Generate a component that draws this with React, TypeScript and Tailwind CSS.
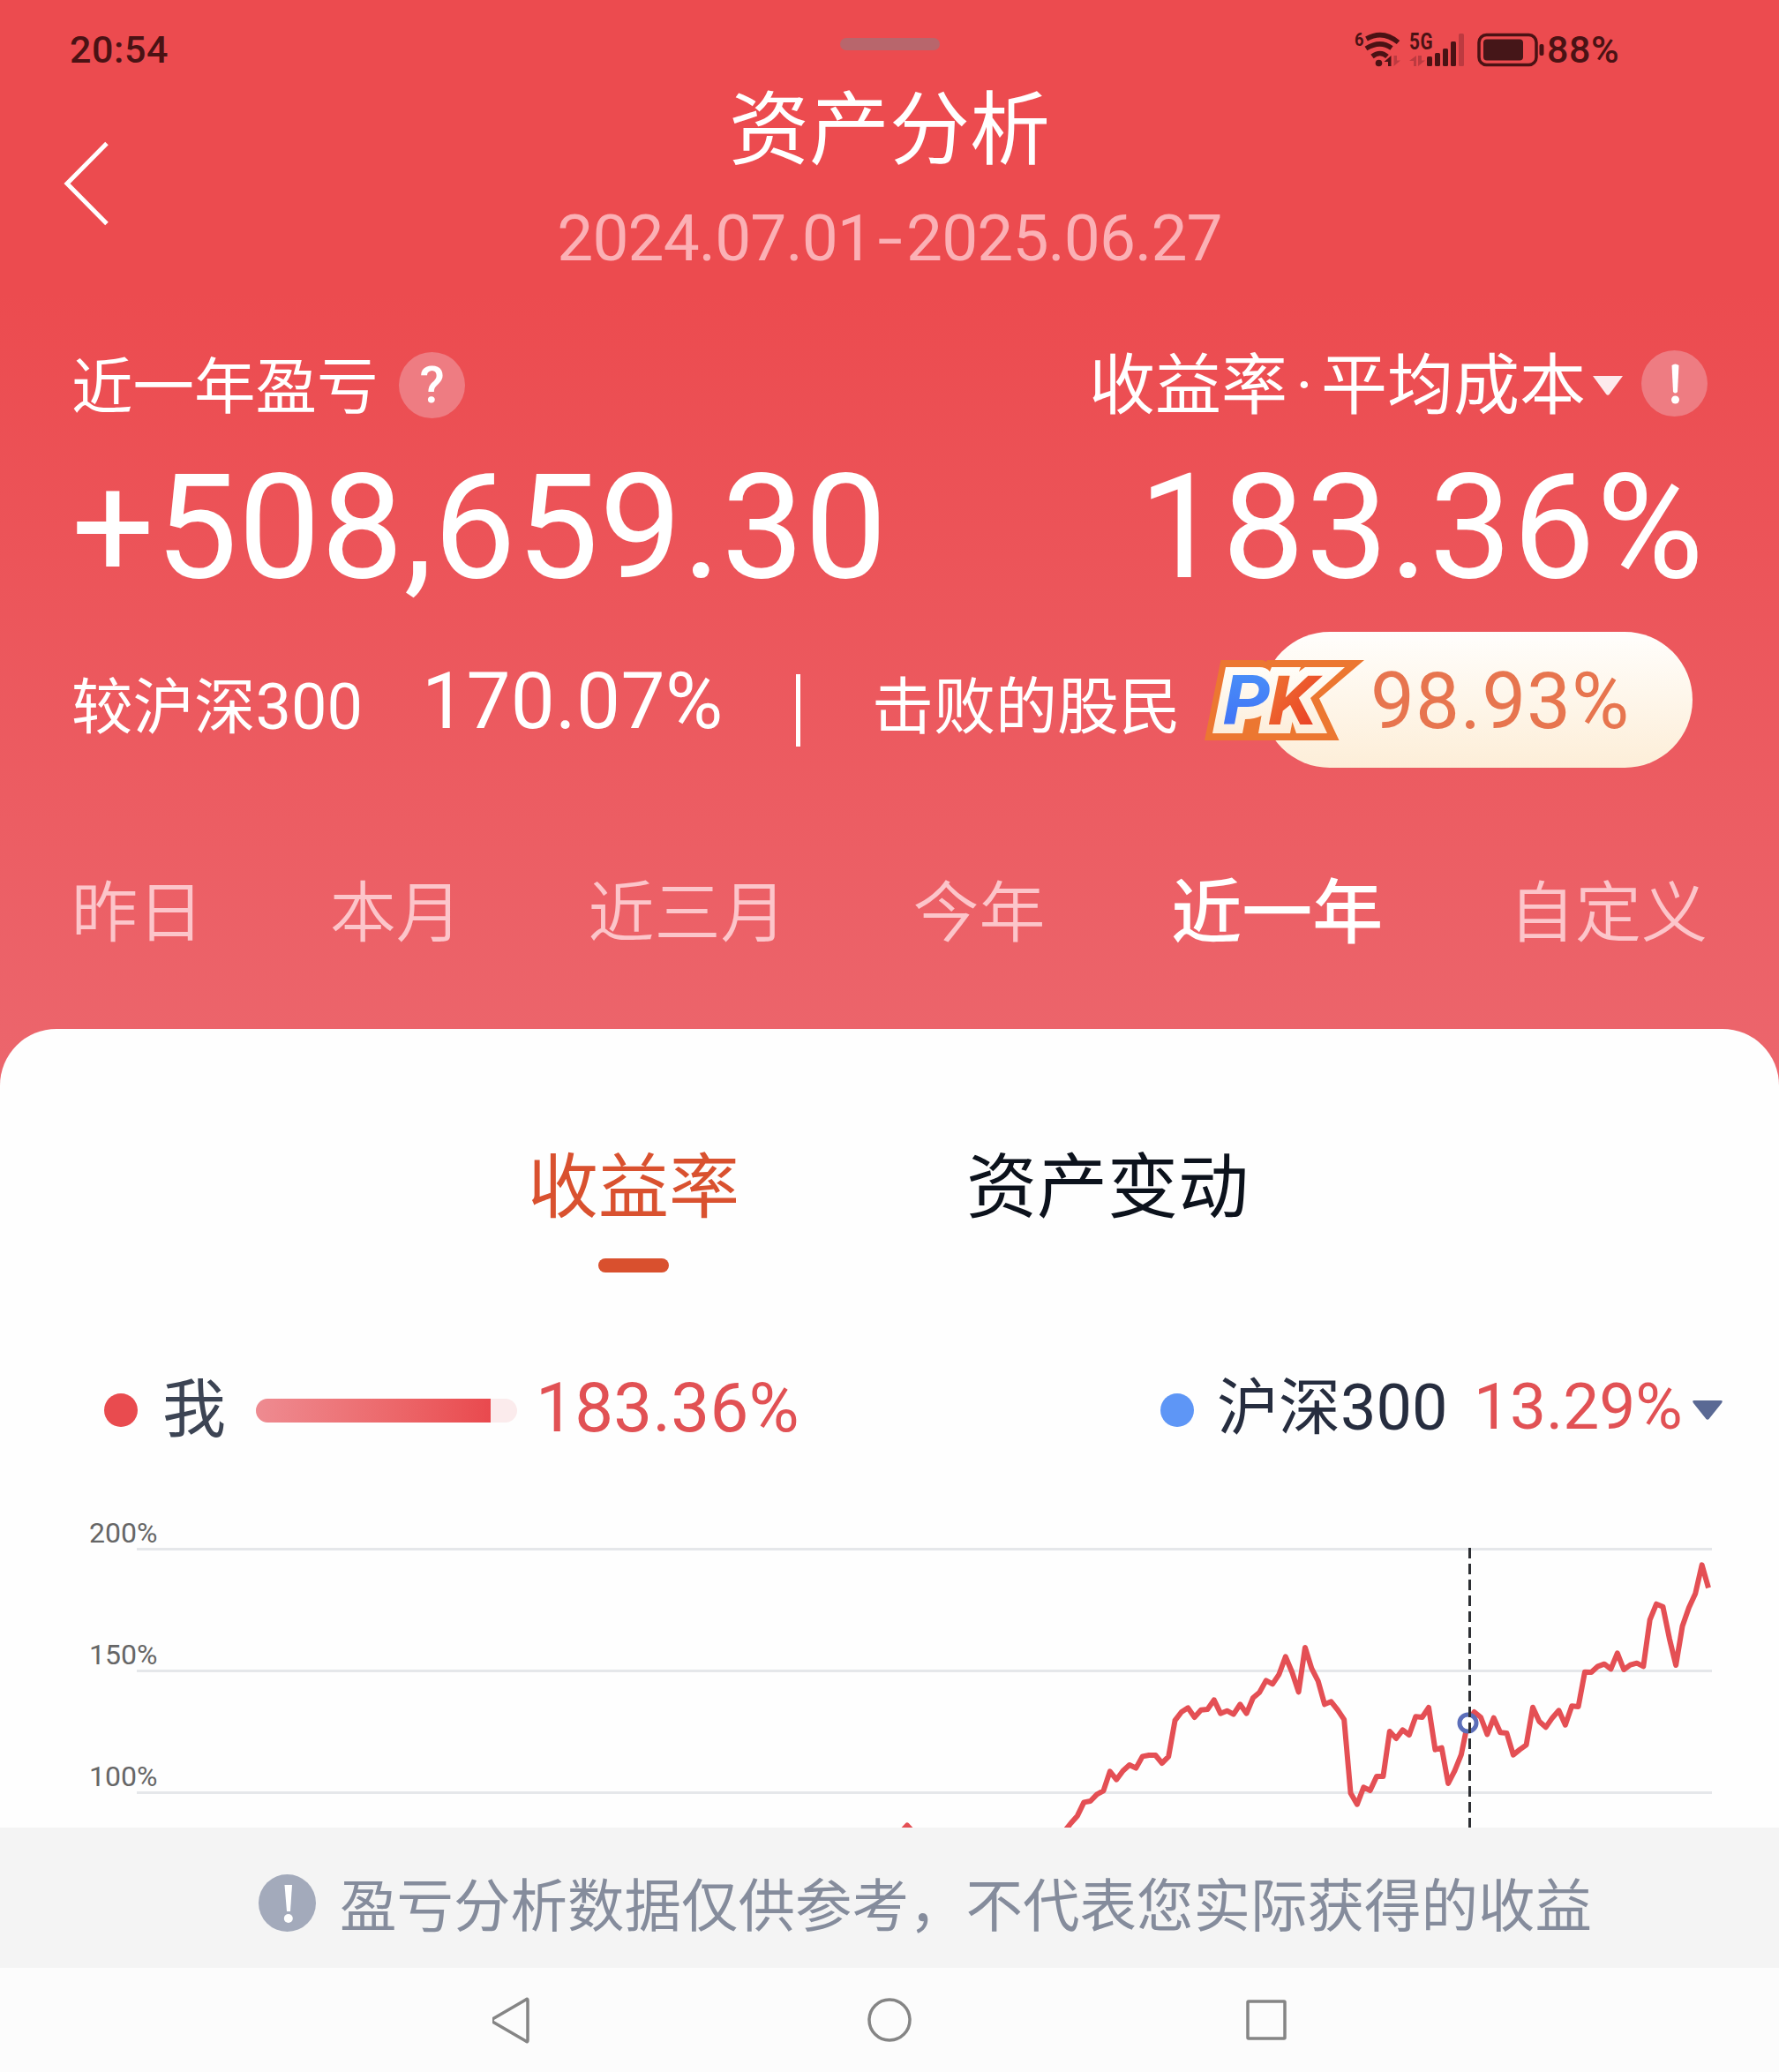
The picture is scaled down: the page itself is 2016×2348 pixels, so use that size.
const periods = ['昨日', '本月', '近三月', '今年', '近一年', '自定义'];

// One value per trading day, in thirds of a pixel below the top of the chart
const series = [
  1066, 1038, 1013, 967, 963, 940, 928, 862, 890, 860, 840, 851, 811, 807, 807, 834, 812, 689, 660, 646,
  678, 653, 651, 619, 665, 656, 668, 634, 665, 612, 593, 553, 565, 532, 472, 525, 592, 441, 512, 555,
  634, 625, 653, 686, 936, 974, 916, 927, 879, 879, 726, 750, 721, 738, 676, 678, 645, 788, 782, 903,
  860, 805, 697, 660, 678, 736, 680, 730, 732, 806, 788, 772, 644, 692, 712, 680, 655, 704, 640, 642,
  524, 525, 505, 497, 514, 460, 516, 500, 494, 505, 347, 293, 302, 410, 501, 368, 305, 257, 160, 238,
];

const START_X = 1206.2;
const STEP_X = 7.372;

const gridLines = [
  { label: '200%', y: 35.5 },
  { label: '150%', y: 173.5 },
  { label: '100%', y: 311.5 },
];

const StatusIcons = () => (
  <svg className="h-[70px] w-[218px]" viewBox="0 0 218 70" fill="none">
    {/* Wi-Fi */}
    <text x="0" y="31" fill="#4a1214" fontSize="21" fontWeight="700" fontFamily="Roboto" textLength="11" lengthAdjust="spacingAndGlyphs">6</text>
    <g stroke="#4a1214" strokeWidth="5.5" strokeLinecap="butt">
      <path d="M13.500 23 Q32 12.500 49.500 27" />
      <path d="M13 34 Q29 24 42 33.500" />
      <path d="M20 43 Q29 36 37 43" />
    </g>
    <circle cx="27.500" cy="50.500" r="3.800" fill="#4a1214" />
    <path d="M41.500 42 V54 H38 V49 H33.500 Z" fill="#4a1214" />
    <path d="M44.500 42 V54 L52 47.500 H48 V42 Z" fill="#bd3a40" />
    {/* Mobile signal */}
    <text x="62" y="35" fill="#4a1214" fontSize="25" fontWeight="700" fontFamily="Roboto" textLength="27" lengthAdjust="spacingAndGlyphs">5G</text>
    <path d="M70 42 V54 H67 V48 H62 Z M72 42 V54 L80 47.500 H76 V42 Z" fill="#bd3a40" />
    <g fill="#4a1214">
      <rect x="82" y="43" width="6" height="11" rx="1.500" />
      <rect x="91" y="39" width="6" height="15" rx="1.500" />
      <rect x="100" y="34" width="6" height="20" rx="1.500" />
      <rect x="109" y="26" width="6" height="28" rx="1.500" />
    </g>
    <rect x="118" y="17" width="6" height="37" rx="1.500" fill="#bd3a40" />
    {/* Battery */}
    <rect x="141" y="18.500" width="65" height="34" rx="8.500" stroke="#4a1214" strokeWidth="3.500" />
    <rect x="146" y="23.500" width="45" height="24" rx="4" fill="#451618" />
    <rect x="209.500" y="29" width="5" height="13" rx="2" fill="#4a1214" />
  </svg>
);

const PkBadge = () => (
  <svg className="absolute -left-[65px] top-8 h-[91px] w-[182px]" viewBox="0 0 182 91">
    <defs>
      <linearGradient id="pkCream" x1="0" y1="0" x2="0" y2="1">
        <stop offset="0" stopColor="#fffdf8" />
        <stop offset="1" stopColor="#fdeedb" />
      </linearGradient>
      <linearGradient id="pkBlue" x1="0" y1="0" x2="0" y2="1">
        <stop offset="0" stopColor="#4a93f8" />
        <stop offset="1" stopColor="#3f6cf6" />
      </linearGradient>
      <linearGradient id="pkRed" x1="0" y1="0" x2="1" y2="1">
        <stop offset="0" stopColor="#ef7a34" />
        <stop offset="1" stopColor="#e93423" />
      </linearGradient>
    </defs>
    <path d="M18.500 0 H66 L70 2 L71 0 H181 L130 43.500 L152.500 91 H0 Z" fill="#ec7731" />
    <path d="M24 8 H62 Q70 8 74 13 L76 8 H109 L107 13 L114 8 H159 L120 43 L139 83 H61 L64.500 63 Q57 67 46 67 L43 83 H9 Z" fill="url(#pkCream)" />
    <path d="M97 83 L99.500 70 L104 83 Z" fill="#ec7731" />
    <g fontFamily="Roboto" fontStyle="italic" fontWeight="700" fontSize="77">
      <text x="21" y="73" fill="url(#pkBlue)" textLength="54" lengthAdjust="spacingAndGlyphs">P</text>
      <text x="72" y="73" fill="url(#pkRed)" textLength="56" lengthAdjust="spacingAndGlyphs">K</text>
    </g>
  </svg>
);

const Header = () => (
  <header className="flex h-[1166px] flex-col text-white">
    <div className="grid h-[100px] grid-cols-3 items-center pt-3 pl-[79px] pr-[179px] text-[43px] font-medium tracking-[0.6px] text-[#4a1214]">
      <span>20:54</span>
      <span className="mb-3 ml-[100px] h-3.5 w-[113px] justify-self-center rounded-full bg-[#b8666c]" />
      <div className="flex items-center justify-end">
        <StatusIcons />
        <span className="w-[84px]">88%</span>
      </div>
    </div>

    <div className="grid grid-cols-[300px_1fr_300px] items-center">
      <svg className="mt-2 ml-[70px] h-[100px] w-[60px]" viewBox="0 0 60 100" fill="none">
        <path d="M51 4.500 L6 50 L51 95.500" stroke="#fff" strokeWidth="5" />
      </svg>
      <div className="flex flex-col items-center">
        <h1 className="h-[97px] text-[91px] leading-[97px]">资产分析</h1>
        <p className="mt-[35px] flex h-[76px] text-[73px] leading-[76px] tracking-[-0.9px] text-[#fbb0b5]">
          2024.07.01<span className="w-[38px] scale-x-140 text-center">-</span>2025.06.27
        </p>
      </div>
    </div>

    <div className="mt-[88px] flex h-20 items-center justify-between pl-[81px] pr-[81px]">
      <div className="flex items-center">
        <span className="w-[371px] pt-2 text-[69.5px] leading-20">近一年盈亏</span>
        <span className="flex size-[75px] items-center justify-center rounded-full bg-[#ee7c82] text-[58px] font-medium">?</span>
      </div>
      <div className="mb-1 flex items-center">
        <span className="flex pt-1.5 text-[75px] leading-20">
          收益率<span className="w-[38px] text-center">·</span>平均成本
        </span>
        <svg className="ml-2 mt-1.5 h-[22px] w-[34px]" viewBox="0 0 34 22">
          <path d="M0 0 H34 L19 20.500 Q17 23 15 20.500 Z" fill="#fdeaec" />
        </svg>
        <svg className="ml-[21px] size-[75px]" viewBox="0 0 75 75">
          <circle cx="37.500" cy="37.500" r="37.500" fill="#ee7c82" />
          <path d="M34.500 17 Q38.500 14 42.500 17 L41 47 Q38.500 50 36 47 Z" fill="#fff" />
          <circle cx="38.500" cy="56" r="4.500" fill="#fff" />
        </svg>
      </div>
    </div>

    <div className="mt-[39px] flex h-[166px] justify-between pl-[81px] pr-[84px] text-[166px] leading-[166px]">
      <span className="tracking-[0.7px]">+508,659.30</span>
      <span className="tracking-[1.4px]">183.36%</span>
    </div>

    <div className="mt-[35px] flex h-[154px] items-center pl-[81px]">
      <span className="w-[397px] pt-[18px] text-[69.5px] leading-20">
        较沪深<span className="text-[72px]">300</span>
      </span>
      <span className="w-[424px] pt-1 text-[89px] leading-20 tracking-[0.4px]">170.07%</span>
      <span className="mt-6 h-[82px] w-[5px] bg-white" />
      <span className="ml-[81px] w-[442px] pt-[18px] text-[70px] leading-20">击败的股民</span>
      <div className="relative flex h-[154px] w-[488px] items-center rounded-full bg-linear-to-b from-[#fffefc] to-[#fdeed8] pt-1 pl-[123px] text-[89px] leading-20 tracking-[0.9px] text-[#e7754f]">
        <PkBadge />
        98.93%
      </div>
    </div>

    <nav className="mt-[115px] flex h-[100px] items-center justify-between px-[81px] text-[75px] leading-[100px] font-[350] text-[#fcc5ca]">
      {periods.map((name) => (
        <span key={name} className={name === '近一年' ? 'text-[80px] font-medium text-white' : ''}>
          {name}
        </span>
      ))}
    </nav>
  </header>
);

const Legend = () => (
  <div className="mt-[116px] flex h-20 items-center justify-between pl-[118px] pr-16 leading-20">
    <div className="flex items-center">
      <span className="size-[38px] rounded-full bg-[#e94b4f]" />
      <span className="ml-7 w-[106px] text-[72px] text-[#3c4454]">我</span>
      <div className="h-[27px] w-[296px] overflow-hidden rounded-full bg-[#fbebec]">
        <div className="h-full w-[90%] bg-linear-to-r from-[#ee8b91] to-[#e9494e]" />
      </div>
      <span className="mb-1 ml-[21px] text-[78px] tracking-[0.3px] text-[#e15154]">183.36%</span>
    </div>
    <div className="flex items-center">
      <span className="size-[38px] rounded-full bg-[#5e96f6]" />
      <span className="mb-1 ml-[26px] w-[291px] text-[70px] text-[#262d3f]">
        沪深<span className="text-[72px]">300</span>
      </span>
      <span className="mb-2 w-[234px] text-[73px] text-[#e15154]">13.29%</span>
      <svg className="ml-3.5 h-[22px] w-[34px]" viewBox="0 0 34 22">
        <path d="M2 0 H32 Q35 0 33 3 L19 20.500 Q17 23 15 20.500 L1 3 Q-1 0 2 0 Z" fill="#5a6994" />
      </svg>
    </div>
  </div>
);

const Chart = () => {
  const points = series.map((v, i) => `${START_X + i * STEP_X},${v / 3}`).join(' ');
  return (
    <svg className="mt-[62px] h-[371px] w-full" viewBox="0 -20 2016 371" fill="none">
      {gridLines.map((line) => (
        <g key={line.label}>
          <path d={`M155 ${line.y} H1940`} stroke="#e5e7ea" strokeWidth="3" />
          <text x="101" y={line.y - 7.5} fill="#666" fontSize="32" fontFamily="Roboto">{line.label}</text>
        </g>
      ))}
      <polyline points="1022,355 1028,348.5 1034,355" stroke="#e44f54" strokeWidth="6" strokeLinejoin="round" />
      <polyline points={points} stroke="#e44f54" strokeWidth="6" strokeLinejoin="round" />
      <circle cx="1663.500" cy="232.500" r="9.500" fill="#fff" stroke="#5b6eb9" strokeWidth="5" />
      <path d="M1665.500 34 V351" stroke="#2d2f33" strokeWidth="3" strokeDasharray="12 6" />
    </svg>
  );
};

const App = () => {
  return (
    <div className="flex h-[2348px] w-[2016px] flex-col overflow-hidden bg-[linear-gradient(to_bottom,#ec4b4f_0px,#ec4b4f_330px,#ec666d_1230px)] font-[Roboto,'Noto_Sans_CJK_SC',sans-serif]">
      <Header />

      <main className="flex h-[905px] flex-col rounded-t-[64px] bg-[#fefefe] pt-[140px]">
        <div className="flex pl-[598px] text-[80px] leading-20">
          <div className="flex w-60 flex-col items-center text-[#d9512f]">
            <span>收益率</span>
            <span className="mt-10 h-4 w-20 rounded-full bg-[#d9502e]" />
          </div>
          <span className="ml-[257px] text-[#0c121c]">资产变动</span>
        </div>
        <Legend />
        <Chart />
      </main>

      <div className="flex h-[159px] items-center bg-[#f4f4f4] pt-3 pl-[293px] text-[64.5px] leading-20 text-[#858c9c]">
        <svg className="mr-[27px] size-[65px]" viewBox="0 0 65 65">
          <circle cx="32.500" cy="32.500" r="32.500" fill="#a3aabb" />
          <path d="M29.500 12 H38 L36 42 H32 Z" fill="#fff" />
          <circle cx="33.800" cy="50" r="5" fill="#fff" />
        </svg>
        <span className="pt-2">盈亏分析数据仅供参考，不代表您实际获得的收益</span>
      </div>

      <div className="flex h-[118px] items-center justify-center bg-[#fcfcfc]">
        <svg className="h-[60px] w-[900px]" viewBox="0 0 900 60" fill="none" stroke="#858585" strokeWidth="3.500" strokeLinejoin="round">
          <path d="M38 7 Q40 5 40 8 V53 Q40 56 38 54 L1 32.500 Q-1 30.500 1 28.500 Z" />
          <circle cx="450" cy="30" r="23" />
          <rect x="856" y="9" width="42" height="42" rx="1" />
        </svg>
      </div>
    </div>
  );
};

export default App;
